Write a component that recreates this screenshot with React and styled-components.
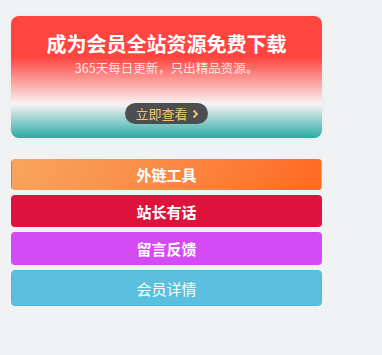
import styled, { createGlobalStyle } from 'styled-components';

const GlobalStyle = createGlobalStyle`
  body {
    margin: 0;
    background: #f1f2f4;
    font-family: "Noto Sans CJK SC", "Noto Sans", sans-serif;
  }
`;

const Sidebar = styled.div`
  width: 311px;
  padding: 16px 0 40px 11px;
`;

const PromoCard = styled.div`
  height: 122px;
  box-sizing: border-box;
  border-radius: 8px;
  padding-top: 16px;
  text-align: center;
  background: linear-gradient(
    to bottom,
    #ff4540 0%,
    #ff4540 34%,
    #f9f3f3 72%,
    #29aba4 100%
  );
  box-shadow: 0 0 6px rgba(0, 0, 0, 0.04);
`;

const PromoTitle = styled.h2`
  margin: 0;
  font-size: 20px;
  line-height: 24px;
  font-weight: 700;
  color: #fff;
`;

const PromoText = styled.p`
  margin: 3px 0 0;
  font-size: 12.5px;
  line-height: 17px;
  color: rgba(255, 255, 255, 0.85);
`;

const ViewButton = styled.a`
  display: inline-flex;
  align-items: center;
  gap: 4px;
  margin-top: 27px;
  height: 21px;
  padding: 0 9px 0 10px;
  border-radius: 11px;
  background: #4b4e53;
  color: #f1c46e;
  font-size: 13px;
  line-height: 21px;
  text-decoration: none;
`;

const LinkList = styled.div`
  display: flex;
  flex-direction: column;
  gap: 5px;
  margin-top: 21px;
`;

const LinkButton = styled.a`
  display: flex;
  align-items: center;
  justify-content: center;
  height: ${(p) => p.$h}px;
  box-sizing: border-box;
  border-radius: 4px;
  border: 1px solid ${(p) => p.$border || 'transparent'};
  background: ${(p) => p.$bg};
  color: #fff;
  font-size: 15px;
  font-weight: ${(p) => (p.$light ? 400 : 700)};
  text-decoration: none;
`;

const links = [
  { label: '外链工具', bg: 'linear-gradient(110deg, #f8a45e 0%, #fa8a43 50%, #ff6a22 100%)', h: 31 },
  { label: '站长有话', bg: '#dc143c', h: 32 },
  { label: '留言反馈', bg: '#d44af5', h: 33 },
  { label: '会员详情', bg: '#5bc0de', border: '#4fb8d8', h: 36, light: true },
];

const App = () => {
  return (
    <>
      <GlobalStyle />
      <Sidebar>
        <PromoCard>
          <PromoTitle>成为会员全站资源免费下载</PromoTitle>
          <PromoText>365天每日更新，只出精品资源。</PromoText>
          <ViewButton href="#">
            立即查看
            <svg width="7" height="10" viewBox="0 0 7 10">
              <polyline points="1.5,1.5 5,5 1.5,8.5" fill="none" stroke="#f1c46e" strokeWidth="2" />
            </svg>
          </ViewButton>
        </PromoCard>
        <LinkList>
          {links.map((l) => (
            <LinkButton key={l.label} href="#" $bg={l.bg} $border={l.border} $h={l.h} $light={l.light}>
              {l.label}
            </LinkButton>
          ))}
        </LinkList>
      </Sidebar>
    </>
  );
};

export default App;
